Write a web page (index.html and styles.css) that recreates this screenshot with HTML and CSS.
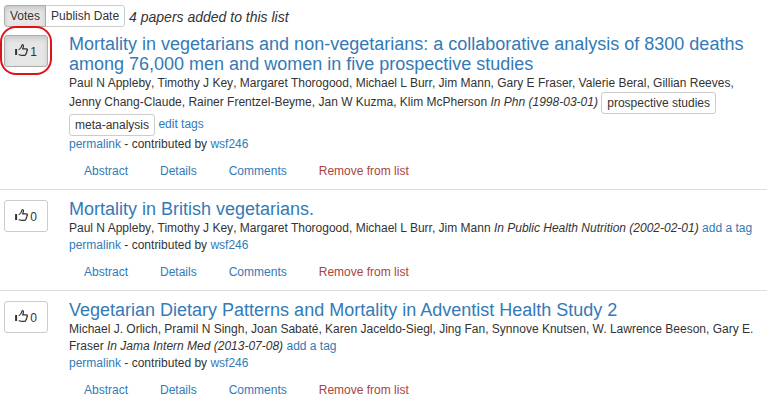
FILE: index.html
```html
<!DOCTYPE html>
<html lang="en">
<head>
<meta charset="utf-8">
<title>Papers</title>
<link rel="stylesheet" href="styles.css">
</head>
<body>
<svg class="defs" aria-hidden="true">
  <symbol id="thumb" viewBox="0 0 13 13">
    <path d="M0.1 5h2v6H0.1z" fill="currentColor"/>
    <path d="M3.7 5.8C5.4 5 6.5 3.4 7 1.2c.2-.8 1.5-.6 1.5.6 0 1.1-.4 2.1-.9 3.1h3.8c1.3 0 1.4 1.6.3 1.9.5.6.2 1.5-.4 1.7.3.7 0 1.4-.6 1.6.1.8-.4 1.2-1.2 1.2H6.7c-1.2 0-1.9-.6-3-.7" fill="none" stroke="currentColor" stroke-width="1.2" stroke-linejoin="round"/>
  </symbol>
</svg>
<header class="toolbar">
  <div class="group"><button class="sort active">Votes</button><button class="sort">Publish Date</button></div>
  <em class="count">4 papers added to this list</em>
</header>
<main>
  <article class="paper first">
    <div class="side"><button class="vote active"><svg class="icon"><use href="#thumb"/></svg><span>1</span></button></div>
    <div class="body">
      <h4><a>Mortality in vegetarians and non-vegetarians: a collaborative analysis of 8300 deaths among 76,000 men and women in five prospective studies</a></h4>
      <div class="meta"><span class="name">Paul N Appleby</span>, <span class="name">Timothy J Key</span>, Margaret Thorogood, Michael L Burr, Jim Mann, Gary E Fraser, Valerie Beral, Gillian Reeves, Jenny Chang-Claude, Rainer Frentzel-Beyme, Jan W Kuzma, Klim McPherson <em>In Phn (1998-03-01)</em> <span class="tag">prospective studies</span> <span class="tag">meta-analysis</span> <a>edit tags</a></div>
      <div><a>permalink</a> - contributed by <a>wsf246</a></div>
      <nav><a>Abstract</a><a>Details</a><a>Comments</a><a class="remove">Remove from list</a></nav>
    </div>
  </article>
  <article class="paper">
    <div class="side"><button class="vote"><svg class="icon"><use href="#thumb"/></svg><span>0</span></button></div>
    <div class="body">
      <h4><a>Mortality in British vegetarians.</a></h4>
      <div class="meta"><span class="name">Paul N Appleby</span>, <span class="name">Timothy J Key</span>, Margaret Thorogood, Michael L Burr, Jim Mann <em>In Public Health Nutrition (2002-02-01)</em> <a>add a tag</a></div>
      <div><a>permalink</a> - contributed by <a>wsf246</a></div>
      <nav><a>Abstract</a><a>Details</a><a>Comments</a><a class="remove">Remove from list</a></nav>
    </div>
  </article>
  <article class="paper">
    <div class="side"><button class="vote"><svg class="icon"><use href="#thumb"/></svg><span>0</span></button></div>
    <div class="body">
      <h4><a>Vegetarian Dietary Patterns and Mortality in Adventist Health Study 2</a></h4>
      <div class="meta">Michael J. Orlich, Pramil N Singh, Joan Sabaté, Karen Jaceldo-Siegl, Jing Fan, Synnove Knutsen, W. Lawrence Beeson, Gary E. Fraser <em>In Jama Intern Med (2013-07-08)</em> <a>add a tag</a></div>
      <div><a>permalink</a> - contributed by <a>wsf246</a></div>
      <nav><a>Abstract</a><a>Details</a><a>Comments</a><a class="remove">Remove from list</a></nav>
    </div>
  </article>
</main>
</body>
</html>
```
FILE: styles.css
```css
* { box-sizing: border-box; }
html { overflow: hidden; }
body {
  margin: 0;
  background: #fff;
  color: #333;
  font: 12px/17px "Liberation Sans", Arial, sans-serif;
}
.defs { display: none; }
a { color: #337ab7; cursor: pointer; }
button {
  margin: 0;
  border: 1px solid #ccc;
  background: #fff;
  color: #333;
  font: inherit;
}
.toolbar {
  display: flex;
  align-items: flex-start;
  gap: 4px;
  height: 30px;
  padding: 5px 0 0 4px;
}
.group { display: flex; }
.sort {
  height: 22px;
  padding: 1px 5px;
  line-height: 18px;
  border-radius: 0 3px 3px 0;
}
.sort:first-child { border-radius: 3px 0 0 3px; }
.sort + .sort { margin-left: -1px; }
.active {
  position: relative;
  z-index: 1;
  background: #e6e6e6;
  border-color: #adadad;
  box-shadow: inset 0 3px 5px rgba(0, 0, 0, .125);
}
.count { font-size: 14px; line-height: 20px; padding-top: 2px; }
.paper {
  display: flex;
  border-top: 1px solid #ddd;
  padding-top: 9px;
}
.paper.first { border-top: 0; padding-top: 4px; }
.side { width: 69px; flex: none; padding: 1px 0 0 4px; }
.vote {
  display: flex;
  align-items: center;
  justify-content: center;
  gap: 2px;
  width: 44px;
  height: 32px;
  padding: 0;
  border-radius: 3px;
}
.vote span { padding-top: 2px; }
.vote.active::after {
  content: "";
  position: absolute;
  inset: -10px -5px -9px;
  border: 2px solid #e01218;
  border-radius: 16px;
}
.icon { width: 13px; height: 13px; margin-top: -2px; }
.body { flex: 1; min-width: 0; padding-right: 8px; }
h4 { margin: 0 0 1px; font-weight: 400; font-size: 18px; line-height: 20px; }
.name { margin-right: .02px; }
.tag {
  display: inline-block;
  height: 22px;
  padding: 1px 5px;
  border: 1px solid #ccc;
  border-radius: 3px;
  line-height: 18px;
  vertical-align: middle;
}
nav { display: flex; gap: 2px; margin-bottom: -1px; }
nav a { padding: 10px 15px; }
nav .remove { color: #a94442; }
```
